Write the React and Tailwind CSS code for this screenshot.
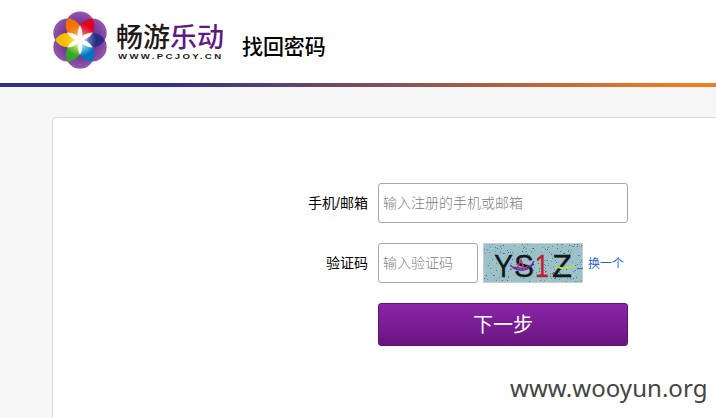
import React from "react";

const R = 14.3;
const point = (deg, len) => {
  const a = (deg * Math.PI) / 180;
  return [len * Math.cos(a), -len * Math.sin(a)];
};
const lens = (deg, len) => {
  const [x, y] = point(deg, len);
  return `M0 0A${R} ${R} 0 0 1 ${x} ${y}A${R} ${R} 0 0 1 0 0Z`;
};

const petals = [
  [0, "#252d86", "#6673b4"],
  [60, "#e00024", "#ec4a52"],
  [120, "#f37200", "#f6923c"],
  [180, "#f8bc00", "#ffd42a"],
  [240, "#35a629", "#a4d54a"],
  [300, "#0073c0", "#6cc6e4"],
];

function FlowerLogo() {
  return (
    <svg className="h-[58px] w-[56px] shrink-0" viewBox="-28 -29 56 58">
      <defs>
        <radialGradient id="ring" gradientUnits="userSpaceOnUse" cx="0" cy="0" r="29">
          <stop offset="0.45" stopColor="#6a2c8f" />
          <stop offset="0.75" stopColor="#8145a0" />
          <stop offset="1" stopColor="#925aae" />
        </radialGradient>
        <radialGradient id="glow" gradientUnits="userSpaceOnUse" cx="0" cy="0" r="8">
          <stop offset="0.1" stopColor="#fff" stopOpacity="0.7" />
          <stop offset="1" stopColor="#fff" stopOpacity="0" />
        </radialGradient>
        {petals.map(([deg, outer, inner]) => (
          <radialGradient key={deg} id={`petal${deg}`} gradientUnits="userSpaceOnUse" cx="0" cy="0" r="25">
            <stop offset="0" stopColor="#fff" />
            <stop offset="0.34" stopColor={inner} />
            <stop offset="0.65" stopColor={outer} />
          </radialGradient>
        ))}
      </defs>
      {[30, 90, 150, 210, 270, 330].map((deg) => {
        const [x, y] = point(deg, R);
        return <circle key={deg} cx={x} cy={y} r={R} fill="url(#ring)" />;
      })}
      {petals.map(([deg]) => (
        <path key={deg} d={lens(deg, R * 1.732)} fill={`url(#petal${deg})`} />
      ))}
      <circle r="8" fill="url(#glow)" />
      {[30, 90, 150, 210, 270, 330].map((deg) => (
        <path key={deg} d={lens(deg, R)} fill="#fff" stroke="#fff" strokeWidth="0.4" />
      ))}
    </svg>
  );
}

let seed = 7;
const rand = () => {
  seed = (seed * 16807) % 2147483647;
  return seed / 2147483647;
};
const speckColors = ["#27566a", "#39798b", "#c9dde5", "#5a5a9a", "#7fbf9b", "#b9a3c4", "#263238", "#75a3d5"];
const specks = Array.from({ length: 420 }, (_, i) => ({
  x: 1 + Math.floor(rand() * 98),
  y: 1 + Math.floor(rand() * 38),
  color: speckColors[i % speckColors.length],
}));

function Captcha() {
  return (
    <svg className="h-10 w-[100px] shrink-0" viewBox="0 0 100 40">
      <rect width="100" height="40" fill="#c8cfd2" />
      <rect x="1" y="1" width="98" height="38" fill="#9bc1c9" />
      {specks.map((s, i) => (
        <rect key={i} x={s.x} y={s.y} width="1" height="1" fill={s.color} opacity="0.6" />
      ))}
      <g className="font-['Liberation_Sans'] font-normal" fontSize="32" fill="#11171a" stroke="#11171a" strokeWidth="0.3">
        <text x="11" y="33.5" textLength="19" lengthAdjust="spacingAndGlyphs">Y</text>
        <text x="31" y="33.5" textLength="20" lengthAdjust="spacingAndGlyphs">S</text>
        <text x="52" y="33.5" textLength="14" lengthAdjust="spacingAndGlyphs" fill="#bd1f2c" stroke="#bd1f2c">1</text>
        <text x="69" y="33.5" textLength="20" lengthAdjust="spacingAndGlyphs">Z</text>
      </g>
      <path d="M27 22q6 6 13 5t11-9M29 24l15 2 7-5" fill="none" stroke="#672c9f" strokeWidth="1.5" />
      <path d="M34 25l4-8 3 9 4-3" fill="none" stroke="#c13273" strokeWidth="1.5" />
      <path d="M74 22q2 4 8 3l9-2" fill="none" stroke="#b5d94b" strokeWidth="2" />
      <path d="M94 25.5h6" stroke="#3e7bb8" strokeWidth="1.2" />
    </svg>
  );
}

export default function App() {
  return (
    <div className="flex h-[418px] w-[716px] flex-col overflow-hidden bg-[#f6f6f6] font-['Liberation_Sans','Noto_Sans_CJK_SC',sans-serif]">
      <header className="flex h-[83px] shrink-0 items-start bg-white pl-[52px] pt-[11px]">
        <FlowerLogo />
        <div className="ml-[8px] w-[110px] pt-[13px]">
          <div className="whitespace-nowrap text-[27px] font-medium leading-[28px] text-[#231815]">
            畅游<span className="text-[#5f1985]">乐动</span>
          </div>
          <div className="ml-[2px] mt-px w-[90px] origin-left scale-x-120 whitespace-nowrap text-[8px] font-bold leading-[8px] tracking-[1.95px] text-[#231815]">
            WWW.PCJOY.CN
          </div>
        </div>
        <h1 className="ml-[16px] mt-[21px] whitespace-nowrap text-[21px] font-medium leading-[30px] tracking-[-0.1px] text-black">找回密码</h1>
      </header>
      <div className="h-1 shrink-0 bg-linear-to-r/srgb from-[#2e3088] from-22% to-[#ee7d21] to-95%" />
      <main className="ml-[52px] mt-[30px] flex flex-1 flex-col rounded-tl-[5px] border-l border-t border-[#dcdcdc] bg-white pt-[65px] text-sm">
        <div className="flex h-10 items-center">
          <label className="w-[315px] whitespace-nowrap text-right text-black">手机/邮箱</label>
          <input className="ml-[10px] h-10 w-[250px] rounded-[3px] border border-[#a9a9a9] bg-white px-1 font-light placeholder:text-[#808080]" placeholder="输入注册的手机或邮箱" />
        </div>
        <div className="mt-5 flex h-10 items-center">
          <label className="w-[315px] whitespace-nowrap text-right text-black">验证码</label>
          <input className="ml-[10px] mr-[5px] h-10 w-[100px] rounded-[3px] border border-[#a9a9a9] bg-white px-1 font-light placeholder:text-[#808080]" placeholder="输入验证码" />
          <Captcha />
          <a className="ml-[5px] mt-px whitespace-nowrap text-xs text-[#2864cf]" href="#">换一个</a>
        </div>
        <button className="ml-[325px] mt-5 h-[43px] w-[250px] rounded-[3px] border border-[#5d1378] bg-linear-to-b from-[#8c24a8] to-[#681681] text-xl font-normal text-white">
          下一步
        </button>
        <footer className="ml-[457px] mt-[25px] whitespace-nowrap font-['Noto_Sans','Open_Sans',sans-serif] text-[24px] leading-[34px] tracking-[0.05px] text-[#444]">
          www.wooyun.org
        </footer>
      </main>
    </div>
  );
}
